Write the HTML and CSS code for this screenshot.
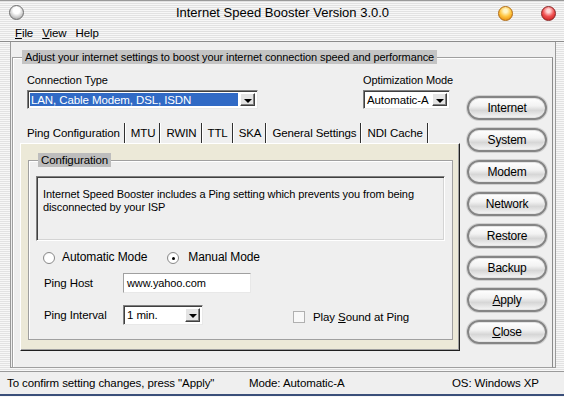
FILE: index.html
```html
<!DOCTYPE html>
<html lang="en">
<head>
    <meta charset="UTF-8">
    <title>Internet Speed Booster Version 3.0.0</title>
    <link rel="stylesheet" href="styles.css">
</head>
<body>
    <div class="window">
        <div class="titlebar">
            <div class="title-left"><span class="orb orb-gray"></span></div>
            <div class="title">Internet Speed Booster Version 3.0.0</div>
            <div class="title-right">
                <span class="orb orb-orange"></span>
                <span class="orb orb-red"></span>
            </div>
        </div>
        <div class="menubar">
            <span><u>F</u>ile</span>
            <span><u>V</u>iew</span>
            <span>Help</span>
        </div>
        <div class="frame">
            <div class="panel">
                <fieldset class="group main-group">
                    <legend>Adjust your internet settings to boost your internet connection speed and performance</legend>
                    <div class="main-grid">
                        <div class="left-col">
                            <div class="conn-row">
                                <div class="field">
                                    <div class="label">Connection Type</div>
                                    <div class="combo combo-conn">
                                        <span class="combo-text selected">LAN, Cable Modem, DSL, ISDN</span>
                                        <span class="combo-btn"></span>
                                    </div>
                                </div>
                                <div class="field">
                                    <div class="label">Optimization Mode</div>
                                    <div class="combo combo-mode">
                                        <span class="combo-text">Automatic-A</span>
                                        <span class="combo-btn"></span>
                                    </div>
                                </div>
                            </div>

                            <div class="tabs">
                                <span class="tab">Ping Configuration</span>
                                <span class="tab">MTU</span>
                                <span class="tab">RWIN</span>
                                <span class="tab">TTL</span>
                                <span class="tab">SKA</span>
                                <span class="tab">General Settings</span>
                                <span class="tab">NDI Cache</span>
                            </div>
                            <div class="tab-page">
                                <fieldset class="group config">
                                    <legend>Configuration</legend>
                                    <div class="config-body">
                                        <div class="desc">Internet Speed Booster includes a Ping setting which prevents you from being disconnected by your ISP</div>
                                        <div class="radio-row">
                                            <span class="radio-item"><span class="radio"></span><span>Automatic Mode</span></span>
                                            <span class="radio-item"><span class="radio checked"></span><span>Manual Mode</span></span>
                                        </div>
                                        <div class="form-row host-row">
                                            <span class="form-label">Ping Host</span>
                                            <span class="textbox">www.yahoo.com</span>
                                        </div>
                                        <div class="form-row interval-row">
                                            <span class="form-label">Ping Interval</span>
                                            <div class="combo combo-interval">
                                                <span class="combo-text">1 min.</span>
                                                <span class="combo-btn"></span>
                                            </div>
                                            <span class="check-item"><span class="checkbox"></span><span>Play <u>S</u>ound at Ping</span></span>
                                        </div>
                                    </div>
                                </fieldset>
                            </div>
                        </div>

                        <div class="buttons">
                            <button class="pill">Internet</button>
                            <button class="pill">System</button>
                            <button class="pill">Modem</button>
                            <button class="pill">Network</button>
                            <button class="pill">Restore</button>
                            <button class="pill">Backup</button>
                            <button class="pill"><u>A</u>pply</button>
                            <button class="pill"><u>C</u>lose</button>
                        </div>
                    </div>
                </fieldset>
            </div>
        </div>
        <div class="statusbar">
            <span class="status-msg">To confirm setting changes, press "Apply"</span>
            <span class="status-mode">Mode: Automatic-A</span>
            <span class="status-os">OS: Windows XP</span>
        </div>
    </div>
</body>
</html>
```

FILE: styles.css
```css
body {
    margin: 0;
    font-family: "Liberation Sans", Arial, sans-serif;
    font-size: 11px;
    letter-spacing: -0.1px;
    color: #000;
    background: repeating-linear-gradient(#f7f7f7 0 1px, #e2e2e2 1px 2px);
}
.window {
    width: 564px;
    height: 397px;
    display: flex;
    flex-direction: column;
    overflow: hidden;
}

/* title bar */
.titlebar {
    height: 20px;
    display: grid;
    grid-template-columns: 1fr auto 1fr;
    align-items: center;
    padding: 2px 8px 0 9px;
    box-sizing: border-box;
    border-top: 1px solid #9a9a9a;
}
.title {
    font-size: 13px;
    letter-spacing: 0;
    padding-top: 1px;
}
.title-right {
    display: flex;
    justify-content: flex-end;
    gap: 28px;
    padding-top: 2px;
}
.orb {
    display: block;
    width: 15px;
    height: 15px;
    border-radius: 50%;
    box-sizing: border-box;
    margin-top: 1px;
}
.orb-gray {
    background: radial-gradient(circle at 50% 35%, #ffffff 0 30%, #cfcfcf 60%, #8a8a8a 100%);
    border: 1px solid #6f6f6f;
}
.orb-orange {
    background: radial-gradient(circle at 50% 30%, #fff6c8 0 15%, #ffc640 50%, #e07a00 100%);
    border: 1px solid #b06a10;
}
.orb-red {
    background: radial-gradient(circle at 50% 30%, #ffd6d6 0 15%, #f05050 50%, #b81010 100%);
    border: 1px solid #8a2020;
}

/* menu */
.menubar {
    height: 22px;
    display: flex;
    align-items: center;
    gap: 9px;
    padding: 5px 0 0 15px;
    box-sizing: border-box;
    border-bottom: 1px solid #8c8c8c;
    font-size: 11.5px;
}

/* frame */
.frame {
    height: 329px;
    padding: 0 8px 0 10px;
    box-sizing: border-box;
}
.panel {
    height: 326px;
    background-color: #efefef;
    border: 1px solid #9a9a9a;
    border-top: none;
    box-sizing: border-box;
    padding: 8px 2px 0 1px;
}

.group {
    margin: 0;
    padding: 0;
    border: 1px solid #a0a0a0;
    box-shadow: inset 1px 1px #ffffff;
    min-width: 0;
}
.group legend {
    margin-left: 9px;
    padding: 0 3px;
    line-height: 14px;
    background-color: #c4c4c4;
}
.main-group {
    height: 316px;
    border-right-color: #8a8a8a;
}
.main-group legend {
    padding: 0 3px 0 3px;
    font-size: 11px;
}
.main-grid {
    display: flex;
    padding: 9px 0 0 7px;
}
.left-col {
    width: 440px;
}

/* connection row */
.conn-row {
    display: flex;
    padding-left: 7px;
}
.conn-row .field:first-child {
    width: 336px;
}
.label {
    line-height: 14px;
}
.combo {
    display: flex;
    height: 19px;
    margin-top: 3px;
    background-color: #fff;
    border: 1px solid #808080;
    border-right-color: #e8e8e8;
    border-bottom-color: #e8e8e8;
    box-shadow: inset 1px 1px #404040;
    box-sizing: border-box;
    padding: 2px;
}
.combo-conn {
    width: 231px;
}
.combo-mode {
    width: 87px;
}
.combo-interval {
    width: 80px;
    height: 20px;
    margin-top: 0;
}
.combo-text {
    flex: 1;
    padding-left: 1px;
    line-height: 14px;
    font-size: 11.5px;
    white-space: nowrap;
    overflow: hidden;
}
.combo-text.selected {
    background-color: #316ac5;
    color: #fff;
    margin-right: 2px;
}
.combo-btn {
    width: 15px;
    position: relative;
    background-color: #e4e4e4;
    border: 1px solid #fff;
    border-right-color: #404040;
    border-bottom-color: #404040;
    box-shadow: inset -1px -1px #808080;
    box-sizing: border-box;
}
.combo-btn::after {
    content: "";
    position: absolute;
    left: 3px;
    top: 5px;
    border-left: 4px solid transparent;
    border-right: 4px solid transparent;
    border-top: 4px solid #000;
}

/* tabs */
.tabs {
    display: flex;
    height: 20px;
    margin-top: 14px;
    padding-left: 2px;
    font-size: 11.5px;
}
.tab {
    padding: 0 4px 0 5px;
    line-height: 21px;
    white-space: nowrap;
    border-right: 1px solid #303030;
    box-shadow: 1px 0 #ffffff;
    margin-right: 1px;
}
.tab-page {
    height: 208px;
    box-sizing: border-box;
    background-color: #ece9d8;
    border: 1px solid #ffffff;
    border-right-color: #202020;
    border-bottom-color: #202020;
    box-shadow: inset -1px -1px #a0a0a0;
    padding: 9px 6px 0 7px;
}
.config {
    height: 185px;
    background-color: #efefef;
    background-clip: padding-box;
}
.config legend {
    background-color: #bdbdbd;
    font-size: 11.5px;
}
.config-body {
    padding: 9px 7px 0 7px;
}
.desc {
    height: 65px;
    box-sizing: border-box;
    border: 1px solid #808080;
    border-right-color: #ffffff;
    border-bottom-color: #ffffff;
    box-shadow: inset 1px 1px #404040, inset -1px -1px #d4d4d4;
    padding: 11px 6px 0 6px;
    line-height: 13px;
}

.radio-row {
    display: flex;
    gap: 20px;
    margin-top: 10px;
    padding-left: 7px;
    line-height: 13px;
    font-size: 12px;
}
.radio-item,
.check-item {
    display: flex;
    align-items: center;
    gap: 7px;
}
.radio-item:last-child {
    gap: 9px;
}
.radio {
    width: 12px;
    height: 12px;
    border-radius: 50%;
    box-sizing: border-box;
    border: 1px solid #8a8a8a;
    background: radial-gradient(circle at 60% 60%, #ffffff 0 55%, #e0e0e0 100%);
    position: relative;
}
.radio.checked::after {
    content: "";
    position: absolute;
    left: 4px;
    top: 4px;
    width: 3px;
    height: 3px;
    border-radius: 50%;
    background-color: #000;
}

.form-row {
    display: flex;
    align-items: center;
    padding-left: 8px;
    font-size: 11.5px;
}
.host-row {
    margin-top: 9px;
}
.interval-row {
    margin-top: 12px;
}
.form-label {
    width: 79px;
}
.textbox {
    width: 128px;
    height: 20px;
    line-height: 18px;
    box-sizing: border-box;
    background-color: #fff;
    border: 1px solid #a0a0a0;
    border-right-color: #e8e8e8;
    border-bottom-color: #e8e8e8;
    padding-left: 3px;
    font-size: 11px;
}
.check-item {
    margin-left: 90px;
    gap: 8px;
    padding-top: 3px;
}
.checkbox {
    width: 12px;
    height: 12px;
    box-sizing: border-box;
    border: 1px solid #b0b0b0;
    background-color: #f8f8f8;
}

/* right buttons */
.buttons {
    display: flex;
    flex-direction: column;
    gap: 8px;
    margin-left: 7px;
    padding-top: 23px;
}
.pill {
    width: 80px;
    height: 24px;
    padding: 0;
    border-radius: 12px;
    border: 2px solid #858585;
    background: linear-gradient(#ffffff 0%, #f2f2f2 40%, #d6d6d6 62%, #f6f6f6 100%);
    box-shadow: inset 0 0 0 1px #e4e4e4, 0 0 0 1px #d0d0d0;
    font-family: "Liberation Sans", Arial, sans-serif;
    font-size: 12px;
    letter-spacing: -0.2px;
    color: #000;
}

/* status bar */
.statusbar {
    height: 25px;
    display: flex;
    align-items: center;
    background-color: #efefef;
    border-top: 1px solid #9a9a9a;
    border-bottom: 2px solid #3a4f7a;
    box-sizing: border-box;
    font-size: 11.5px;
}
.status-msg {
    width: 242px;
    padding-left: 7px;
}
.status-mode {
    width: 203px;
}
```
